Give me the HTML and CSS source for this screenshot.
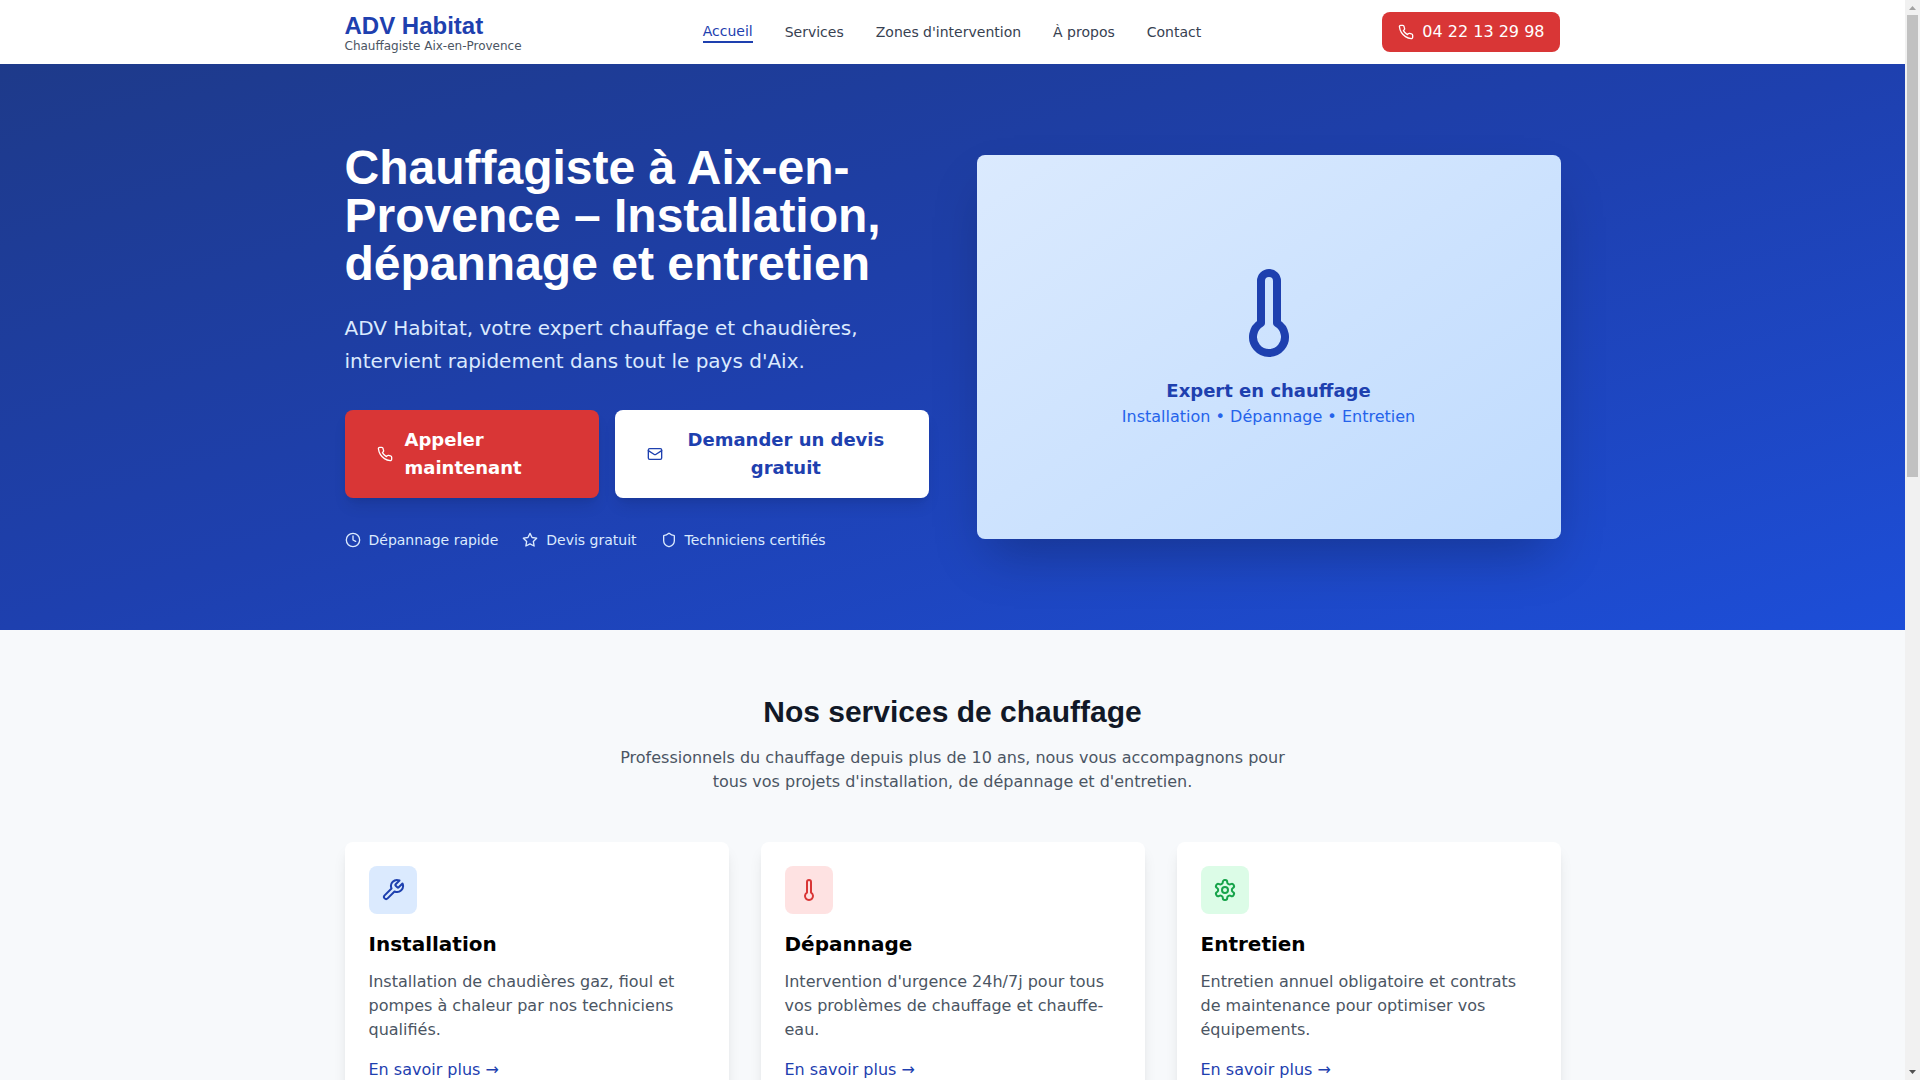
FILE: index.html
```html
<!DOCTYPE html>
<html lang="fr">
<head>
  <meta charset="UTF-8">
  <title>ADV Habitat - Chauffagiste Aix-en-Provence</title>
  <meta name="viewport" content="width=device-width, initial-scale=1.0">
  <link rel="stylesheet" href="styles.css">
</head>
<body>
  <div class="page">
    <header class="header">
      <div class="container header-inner">
        <a class="logo" href="#">
          <span class="logo-name">ADV Habitat</span>
          <span class="logo-sub">Chauffagiste Aix-en-Provence</span>
        </a>
        <nav class="nav">
          <a class="active" href="#">Accueil</a>
          <a href="#services">Services</a>
          <a href="#zones">Zones d'intervention</a>
          <a href="#apropos">À propos</a>
          <a href="#contact">Contact</a>
        </nav>
        <a class="phone" href="tel:0422132998">
          <svg class="icon" viewBox="0 0 24 24"><path d="M22 16.92v3a2 2 0 0 1-2.18 2 19.79 19.79 0 0 1-8.63-3.07 19.5 19.5 0 0 1-6-6 19.79 19.79 0 0 1-3.07-8.67A2 2 0 0 1 4.11 2h3a2 2 0 0 1 2 1.72 12.84 12.84 0 0 0 .7 2.81 2 2 0 0 1-.45 2.11L8.09 9.91a16 16 0 0 0 6 6l1.27-1.27a2 2 0 0 1 2.11-.45 12.84 12.84 0 0 0 2.81.7A2 2 0 0 1 22 16.92z"/></svg>
          04 22 13 29 98
        </a>
      </div>
    </header>

    <main>
      <section class="hero">
        <div class="container hero-grid">
          <div>
            <h1>Chauffagiste à Aix-en-Provence – Installation, dépannage et entretien</h1>
            <p class="hero-text">ADV Habitat, votre expert chauffage et chaudières, intervient rapidement dans tout le pays d'Aix.</p>
            <div class="hero-actions">
              <a class="btn btn-call" href="tel:0422132998">
                <svg class="icon" viewBox="0 0 24 24"><path d="M22 16.92v3a2 2 0 0 1-2.18 2 19.79 19.79 0 0 1-8.63-3.07 19.5 19.5 0 0 1-6-6 19.79 19.79 0 0 1-3.07-8.67A2 2 0 0 1 4.11 2h3a2 2 0 0 1 2 1.72 12.84 12.84 0 0 0 .7 2.81 2 2 0 0 1-.45 2.11L8.09 9.91a16 16 0 0 0 6 6l1.27-1.27a2 2 0 0 1 2.11-.45 12.84 12.84 0 0 0 2.81.7A2 2 0 0 1 22 16.92z"/></svg>
                Appeler maintenant
              </a>
              <button class="btn btn-quote" type="button">
                <svg class="icon" viewBox="0 0 24 24"><rect x="2" y="4" width="20" height="16" rx="2"/><path d="m22 7-8.97 5.7a1.94 1.94 0 0 1-2.06 0L2 7"/></svg>
                Demander un devis gratuit
              </button>
            </div>
            <ul class="hero-points">
              <li>
                <svg class="icon" viewBox="0 0 24 24"><circle cx="12" cy="12" r="10"/><path d="M12 6v6l4 2"/></svg>
                Dépannage rapide
              </li>
              <li>
                <svg class="icon" viewBox="0 0 24 24"><path d="M12 2l3.09 6.26L22 9.27l-5 4.87 1.18 6.88L12 17.77l-6.18 3.25L7 14.14 2 9.27l6.91-1.01L12 2z"/></svg>
                Devis gratuit
              </li>
              <li>
                <svg class="icon" viewBox="0 0 24 24"><path d="M20 13c0 5-3.5 7.5-7.66 8.95a1 1 0 0 1-.67-.01C7.5 20.5 4 18 4 13V6a1 1 0 0 1 1-1c2 0 4.5-1.2 6.24-2.72a1.17 1.17 0 0 1 1.52 0C14.51 3.81 17 5 19 5a1 1 0 0 1 1 1z"/></svg>
                Techniciens certifiés
              </li>
            </ul>
          </div>
          <div class="hero-card">
            <svg class="icon" viewBox="0 0 24 24"><path d="M14 4v10.54a4 4 0 1 1-4 0V4a2 2 0 0 1 4 0Z"/></svg>
            <p class="hero-card-title">Expert en chauffage</p>
            <p class="hero-card-text">Installation • Dépannage • Entretien</p>
          </div>
        </div>
      </section>

      <section class="services" id="services">
        <div class="container">
          <h2>Nos services de chauffage</h2>
          <p class="services-intro">Professionnels du chauffage depuis plus de 10 ans, nous vous accompagnons pour tous vos projets d'installation, de dépannage et d'entretien.</p>
          <div class="cards">
            <article class="card">
              <div class="card-icon blue">
                <svg class="icon" viewBox="0 0 24 24"><path d="M14.7 6.3a1 1 0 0 0 0 1.4l1.6 1.6a1 1 0 0 0 1.4 0l3.77-3.77a6 6 0 0 1-7.94 7.94l-6.91 6.91a2.12 2.12 0 0 1-3-3l6.91-6.91a6 6 0 0 1 7.94-7.94l-3.76 3.76z"/></svg>
              </div>
              <h3>Installation</h3>
              <p>Installation de chaudières gaz, fioul et pompes à chaleur par nos techniciens qualifiés.</p>
              <a href="#installation">En savoir plus →</a>
            </article>
            <article class="card">
              <div class="card-icon red">
                <svg class="icon" viewBox="0 0 24 24"><path d="M14 4v10.54a4 4 0 1 1-4 0V4a2 2 0 0 1 4 0Z"/></svg>
              </div>
              <h3>Dépannage</h3>
              <p>Intervention d'urgence 24h/7j pour tous vos problèmes de chauffage et chauffe-eau.</p>
              <a href="#depannage">En savoir plus →</a>
            </article>
            <article class="card">
              <div class="card-icon green">
                <svg class="icon" viewBox="0 0 24 24"><path d="M12.22 2h-.44a2 2 0 0 0-2 2v.18a2 2 0 0 1-1 1.73l-.43.25a2 2 0 0 1-2 0l-.15-.08a2 2 0 0 0-2.73.73l-.22.38a2 2 0 0 0 .73 2.73l.15.1a2 2 0 0 1 1 1.72v.51a2 2 0 0 1-1 1.74l-.15.09a2 2 0 0 0-.73 2.73l.22.38a2 2 0 0 0 2.73.73l.15-.08a2 2 0 0 1 2 0l.43.25a2 2 0 0 1 1 1.73V20a2 2 0 0 0 2 2h.44a2 2 0 0 0 2-2v-.18a2 2 0 0 1 1-1.73l.43-.25a2 2 0 0 1 2 0l.15.08a2 2 0 0 0 2.73-.73l.22-.39a2 2 0 0 0-.73-2.73l-.15-.08a2 2 0 0 1-1-1.74v-.5a2 2 0 0 1 1-1.74l.15-.09a2 2 0 0 0 .73-2.73l-.22-.38a2 2 0 0 0-2.73-.73l-.15.08a2 2 0 0 1-2 0l-.43-.25a2 2 0 0 1-1-1.73V4a2 2 0 0 0-2-2z"/><circle cx="12" cy="12" r="3"/></svg>
              </div>
              <h3>Entretien</h3>
              <p>Entretien annuel obligatoire et contrats de maintenance pour optimiser vos équipements.</p>
              <a href="#entretien">En savoir plus →</a>
            </article>
          </div>
        </div>
      </section>
    </main>
  </div>

  <div class="scrollbar" aria-hidden="true">
    <svg class="scroll-arrow up" viewBox="0 0 15 15"><path d="M4 10h7L7.500 6z"/></svg>
    <div class="scroll-track"><div class="scroll-thumb"></div></div>
    <svg class="scroll-arrow down" viewBox="0 0 15 15"><path d="M4 5h7L7.500 9z"/></svg>
  </div>
</body>
</html>
```
FILE: styles.css
```css
* { box-sizing: border-box; margin: 0; padding: 0; }
html { scrollbar-width: none; }
body { display: flex; align-items: flex-start; font-family: "DejaVu Sans", sans-serif; font-size: 16px; line-height: 24px; color: #000; background: #f7f9fb; }
a { color: inherit; text-decoration: none; }
ul { list-style: none; }
h1, h2, .logo-name { font-family: "Liberation Sans", Arial, sans-serif; font-weight: bold; }
.page { flex: 1; min-width: 0; }
.container { max-width: 1280px; margin: 0 auto; padding: 0 32px; }
.icon { width: 16px; height: 16px; flex-shrink: 0; fill: none; stroke: currentColor; stroke-width: 2; stroke-linecap: round; stroke-linejoin: round; }

/* header */
.header { background: #fff; }
.header-inner { display: flex; align-items: center; justify-content: space-between; min-height: 64px; }
.logo { display: flex; flex-direction: column; }
.logo-name { font-size: 24px; line-height: 32px; color: #1e40af; }
.logo-sub { margin-top: -4px; font-size: 12px; line-height: 16px; color: #4b5563; }
.nav { display: flex; align-items: center; gap: 32px; font-size: 14px; line-height: 20px; color: #374151; }
.nav .active { color: #1e40af; border-bottom: 2px solid #1e40af; }
.phone { display: flex; align-items: center; gap: 8px; padding: 8px 16px; border-radius: 8px; background: #d93636; color: #fff; }

/* hero */
.hero { padding: 80px 0; background: linear-gradient(to bottom right, #1e3a8a, #1e40af, #1d4ed8); color: #fff; }
.hero-grid { display: grid; grid-template-columns: 1fr 1fr; gap: 48px; align-items: center; }
.hero h1 { font-size: 48px; line-height: 48px; margin-bottom: 24px; }
.hero-text { font-size: 20px; line-height: 33px; margin-bottom: 32px; color: #dbeafe; }
.hero-actions { display: flex; gap: 16px; margin-bottom: 32px; }
.btn { display: flex; align-items: center; justify-content: center; gap: 12px; padding: 16px 32px; border: none; border-radius: 8px; font-family: inherit; font-size: 18px; font-weight: bold; line-height: 28px; cursor: pointer; box-shadow: 0 10px 15px -3px rgba(0,0,0,0.1), 0 4px 6px -4px rgba(0,0,0,0.1); }
.btn-call { background: #d93636; color: #fff; }
.btn-quote { background: #fff; color: #1e40af; }
.hero-points { display: flex; gap: 24px; font-size: 14px; line-height: 20px; color: #dbeafe; }
.hero-points li { display: flex; align-items: center; gap: 8px; }
.hero-card { display: flex; flex-direction: column; align-items: center; justify-content: center; min-height: 384px; border-radius: 8px; background: linear-gradient(to bottom right, #dbeafe, #bfdbfe); color: #1e40af; box-shadow: 0 25px 50px -12px rgba(0,0,0,0.25); }
.hero-card .icon { width: 96px; height: 96px; margin-bottom: 16px; }
.hero-card-title { font-size: 18px; font-weight: bold; line-height: 28px; }
.hero-card-text { color: #2563eb; }

/* services */
.services { padding: 64px 0; }
.services h2 { font-size: 30px; line-height: 36px; margin-bottom: 16px; text-align: center; color: #111827; }
.services-intro { max-width: 672px; margin: 0 auto 48px; text-align: center; color: #4b5563; }
.cards { display: grid; grid-template-columns: repeat(3, 1fr); gap: 32px; }
.card { padding: 24px; border-radius: 8px; background: #fff; box-shadow: 0 10px 15px -3px rgba(0,0,0,0.1), 0 4px 6px -4px rgba(0,0,0,0.1); }
.card-icon { display: flex; align-items: center; justify-content: center; width: 48px; height: 48px; margin-bottom: 16px; border-radius: 8px; }
.card-icon .icon { width: 24px; height: 24px; }
.blue { background: #dbeafe; color: #1e40af; }
.red { background: #fee2e2; color: #d93636; }
.green { background: #dcfce7; color: #16a34a; }
.card h3 { font-size: 20px; line-height: 28px; margin-bottom: 12px; }
.card p { margin-bottom: 16px; color: #4b5563; }
.card a { color: #1e40af; }

/* scrollbar */
.scrollbar { position: sticky; top: 0; display: flex; flex-direction: column; width: 15px; height: 100vh; background: #f1f1f1; }
.scroll-arrow { width: 15px; height: 15px; }
.up { fill: #a3a3a3; }
.down { fill: #505050; }
.scroll-track { flex: 1; padding: 0 2px; }
.scroll-thumb { height: 44%; background: #c1c1c1; }
```
